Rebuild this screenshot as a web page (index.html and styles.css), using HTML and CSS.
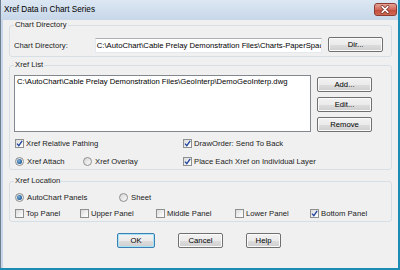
FILE: index.html
```html
<!DOCTYPE html>
<html lang="en">
<head>
    <meta charset="UTF-8">
    <title>Xref Data in Chart Series</title>
    <link rel="stylesheet" href="styles.css">
</head>
<body>

<div class="window">
    <div class="titlebar">
        <span class="title">Xref Data in Chart Series</span>
        <span class="close">
            <svg width="23" height="13" viewBox="0 0 23 13">
                <path d="M8.5 3.5 L14.5 9.5 M14.5 3.5 L8.5 9.5" stroke="#7a2f26" stroke-width="3.2" stroke-linecap="round"/>
                <path d="M8.5 3.5 L14.5 9.5 M14.5 3.5 L8.5 9.5" stroke="#fff" stroke-width="1.6" stroke-linecap="round"/>
            </svg>
        </span>
    </div>

    <div class="client">
        <fieldset class="group group-dir">
            <legend>Chart Directory</legend>
            <div class="dir-row">
                <span class="dir-label">Chart Directory:</span>
                <div class="textbox">C:\AutoChart\Cable Prelay Demonstration Files\Charts-PaperSpac</div>
                <button class="btn btn-dir">Dir...</button>
            </div>
        </fieldset>

        <fieldset class="group group-list">
            <legend>Xref List</legend>
            <div class="list-row">
                <div class="listbox">C:\AutoChart\Cable Prelay Demonstration Files\GeoInterp\DemoGeoInterp.dwg</div>
                <div class="list-buttons">
                    <button class="btn btn-side">Add...</button>
                    <button class="btn btn-side">Edit...</button>
                    <button class="btn btn-side">Remove</button>
                </div>
            </div>
            <div class="opt-grid">
                <label class="opt"><span class="box"><svg width="7" height="7" viewBox="0 0 7 7"><path d="M1 3.6 L2.8 5.6 L6.2 0.8" fill="none" stroke="#21439c" stroke-width="1.3"/></svg></span>Xref Relative Pathing</label>
                <label class="opt"><span class="box"><svg width="7" height="7" viewBox="0 0 7 7"><path d="M1 3.6 L2.8 5.6 L6.2 0.8" fill="none" stroke="#21439c" stroke-width="1.3"/></svg></span>DrawOrder: Send To Back</label>
                <div class="radio-pair">
                    <label class="opt opt-attach"><span class="radio"><span class="dot"></span></span>Xref Attach</label>
                    <label class="opt"><span class="radio"></span>Xref Overlay</label>
                </div>
                <label class="opt"><span class="box"><svg width="7" height="7" viewBox="0 0 7 7"><path d="M1 3.6 L2.8 5.6 L6.2 0.8" fill="none" stroke="#21439c" stroke-width="1.3"/></svg></span>Place Each Xref on Individual Layer</label>
            </div>
        </fieldset>

        <fieldset class="group group-loc">
            <legend>Xref Location</legend>
            <div class="loc-radios">
                <label class="opt opt-panels"><span class="radio"><span class="dot"></span></span>AutoChart Panels</label>
                <label class="opt"><span class="radio"></span>Sheet</label>
            </div>
            <div class="panel-grid">
                <label class="opt"><span class="box"></span>Top Panel</label>
                <label class="opt"><span class="box"></span>Upper Panel</label>
                <label class="opt"><span class="box"></span>Middle Panel</label>
                <label class="opt"><span class="box"></span>Lower Panel</label>
                <label class="opt"><span class="box"><svg width="7" height="7" viewBox="0 0 7 7"><path d="M1 3.6 L2.8 5.6 L6.2 0.8" fill="none" stroke="#21439c" stroke-width="1.3"/></svg></span>Bottom Panel</label>
            </div>
        </fieldset>

        <div class="dialog-buttons">
            <button class="btn btn-ok">OK</button>
            <button class="btn btn-cancel">Cancel</button>
            <button class="btn btn-help">Help</button>
        </div>
    </div>
</div>

</body>
</html>
```

FILE: styles.css
```css
body {
    margin: 0;
    width: 400px;
    height: 270px;
    overflow: hidden;
    background: #1b8cb4;
    font-family: "Liberation Sans", Arial, sans-serif;
    font-size: 7.7px;
    color: #222;
}
.window {
    width: 398px;
    height: 268px;
    box-sizing: border-box;
    display: flex;
    flex-direction: column;
    border-left: 1px solid #6f7e8e;
    background: linear-gradient(#dce7f3, #c7d7e9 20px, #c7d7e9);
}
.titlebar {
    height: 20px;
    display: flex;
    justify-content: space-between;
    align-items: flex-start;
    padding-left: 3px;
}
.title {
    font-size: 8.2px;
    line-height: 20px;
    color: #000;
}
.close {
    width: 23px;
    height: 13px;
    margin-top: 3px;
    margin-right: 1px;
    box-sizing: border-box;
    border: 1px solid #8b3b31;
    border-radius: 3px;
    background: linear-gradient(#e6a496, #d0685a 50%, #c2483a 51%, #cf6a52);
    display: flex;
}
.close svg {
    margin: -1px 0 0 -1px;
}
.client {
    flex: 1;
    margin-left: 2px;
    background: #f0f0f0;
    padding: 0 6px;
    display: flex;
    flex-direction: column;
}
.group {
    margin: 0;
    border: 1px solid #d5dfe5;
    border-radius: 3px;
    min-width: 0;
}
.group legend {
    padding: 0 1px;
    line-height: 10px;
    font-size: 7.7px;
}
.group-dir {
    padding: 7px 8px 3px 4px;
}
.group-list {
    margin-top: 3px;
    padding: 5px 4px 2px 4px;
}
.group-loc {
    margin-top: 6px;
    padding: 5px 4px 2px 4px;
}
.dir-row {
    display: flex;
    align-items: center;
    height: 16px;
}
.dir-label {
    width: 81px;
}
.textbox {
    width: 228px;
    height: 15px;
    margin-top: 1px;
    box-sizing: border-box;
    border: 1px solid #e3e9ef;
    border-top-color: #abadb3;
    background: #fff;
    padding-left: 1px;
    line-height: 13px;
    white-space: nowrap;
    overflow: hidden;
    color: #000;
}
.btn {
    height: 15px;
    box-sizing: border-box;
    padding: 0;
    font-family: inherit;
    font-size: 7.7px;
    color: #000;
    border: 1px solid #707070;
    border-radius: 2px;
    background: linear-gradient(#f2f2f2, #ebebeb 50%, #dddddd 51%, #cfcfcf);
    box-shadow: inset 0 0 0 1px #fbfbfb;
}
.btn-dir {
    width: 55px;
    margin-left: 6px;
    align-self: flex-start;
}
.list-row {
    display: flex;
    gap: 6px;
}
.listbox {
    width: 297px;
    height: 57px;
    box-sizing: border-box;
    border: 1px solid #828790;
    background: #fff;
    padding: 1px 2px;
    line-height: 10px;
    white-space: nowrap;
    overflow: hidden;
    color: #000;
}
.list-buttons {
    display: flex;
    flex-direction: column;
    gap: 5px;
    padding-top: 2px;
}
.btn-side {
    width: 55px;
}
.opt-grid {
    display: grid;
    grid-template-columns: 168px 1fr;
    row-gap: 6px;
    margin-top: 5px;
}
.opt {
    display: flex;
    align-items: center;
    height: 12px;
    white-space: nowrap;
}
.box {
    width: 9px;
    height: 9px;
    box-sizing: border-box;
    margin: 0 2px 0 1px;
    border: 1px solid #8e8f8f;
    background: linear-gradient(135deg, #dadada, #f6f6f6 70%, #fff);
    display: flex;
    align-items: center;
    justify-content: center;
}
.radio {
    width: 9px;
    height: 9px;
    box-sizing: border-box;
    margin: 0 3px 0 1px;
    border: 1px solid #8e8f8f;
    border-radius: 50%;
    background: linear-gradient(135deg, #d6d6d6, #fafafa);
    display: flex;
    align-items: center;
    justify-content: center;
}
.dot {
    width: 5px;
    height: 5px;
    border-radius: 50%;
    background: radial-gradient(circle at 40% 40%, #7fb4e6, #1f5a94 70%);
}
.radio-pair {
    display: flex;
}
.opt-attach {
    width: 68px;
}
.loc-radios {
    display: flex;
}
.opt-panels {
    width: 104px;
}
.panel-grid {
    display: grid;
    grid-template-columns: 65px 76px 79px 75px auto;
    margin-top: 4px;
}
.dialog-buttons {
    display: flex;
    justify-content: center;
    gap: 23px;
    margin-top: 11px;
    padding-right: 3px;
}
.btn-ok {
    width: 38px;
    border-color: #3c7fb1;
    box-shadow: inset 0 0 0 1px #a8e2f8;
}
.btn-cancel {
    width: 45px;
}
.btn-help {
    width: 35px;
}
```
